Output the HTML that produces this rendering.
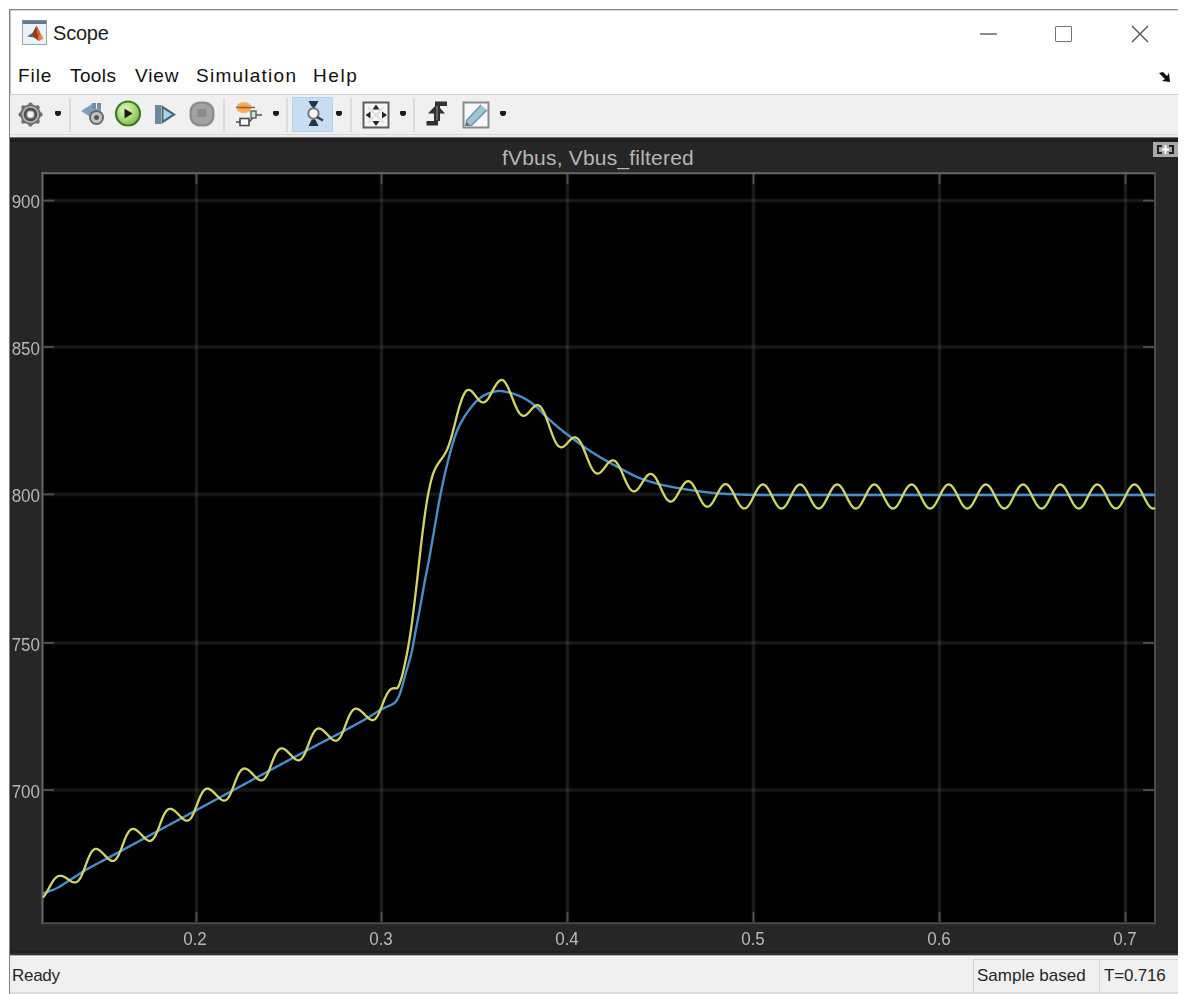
<!DOCTYPE html>
<html><head><meta charset="utf-8">
<style>
html,body{margin:0;padding:0;background:#ffffff;width:1188px;height:994px;overflow:hidden;}
body{position:relative;font-family:"Liberation Sans",sans-serif;}
.a{position:absolute;}
#win{left:9px;top:9px;width:1169px;height:985px;background:#ffffff;border-top:1px solid #888888;border-left:1px solid #828282;box-sizing:border-box;}
.t{position:absolute;white-space:nowrap;line-height:1;}
#menu .t{font-size:19px;color:#111111;top:65.5px;letter-spacing:0.4px;}
#tb{left:10px;top:94px;width:1168px;height:43px;background:#f0f0f0;border-top:1px solid #cfcfcf;box-sizing:border-box;}
#panel{left:10px;top:137px;width:1168px;height:818px;background:#262626;}
#sb{left:10px;top:957px;width:1168px;height:37px;background:#f0f0f0;}
.lbl{position:absolute;font-size:17px;color:#b8b8b8;line-height:1;white-space:nowrap;transform:scaleY(1.12);transform-origin:50% 55%;}
.sep{position:absolute;top:98px;width:2px;height:34px;background:#dcdcdc;}
.dd{position:absolute;top:111px;width:6px;height:5px;background:#1a1a1a;border-radius:1px 1px 3px 3px;}
</style></head><body>
<div id="win" class="a"></div>
<div class="a" style="left:10px;top:10px;width:1168px;height:1px;background:#d4d4d4;"></div><div class="a" style="left:10px;top:10px;width:1px;height:84px;background:#c4c4c4;"></div>

<!-- title bar -->
<svg class="a" style="left:22px;top:20px" width="26" height="26" viewBox="0 0 26 26">
  <rect x="0.5" y="0.5" width="24" height="24" fill="#eaf3f8" stroke="#9aa6b0"/>
  <rect x="0.5" y="0.5" width="24" height="3.5" fill="#66788e"/>
  <path d="M5 16.5 L11 12.5 L12.5 17.5 Z" fill="#5a6080"/>
  <path d="M10.5 13 L14.5 5.5 L17 21 L12 17.5 Z" fill="#9a3a1a"/>
  <path d="M14.5 5.5 L21.5 18.5 L17 21 Z" fill="#e2844c"/>
  <path d="M14.5 5.5 L18 13 L17 21 Z" fill="#c86030"/>
</svg>
<div class="t" style="left:53px;top:23px;font-size:20px;color:#1e1e1e;letter-spacing:-0.2px;">Scope</div>
<div class="a" style="left:980px;top:33px;width:17px;height:2px;background:#8c8c8c;"></div>
<div class="a" style="left:1055px;top:26px;width:17px;height:16px;border:1.5px solid #747474;border-radius:1px;box-sizing:border-box;"></div>
<svg class="a" style="left:1131px;top:25px" width="18" height="18" viewBox="0 0 18 18"><path d="M1 1 L17 17 M17 1 L1 17" stroke="#5c5c5c" stroke-width="1.5"/></svg>

<!-- menu -->
<div id="menu">
<div class="t" style="left:18px;letter-spacing:0.9px">File</div>
<div class="t" style="left:70px">Tools</div>
<div class="t" style="left:135px;letter-spacing:0.9px">View</div>
<div class="t" style="left:196px;letter-spacing:1.25px">Simulation</div>
<div class="t" style="left:313px;letter-spacing:1.6px">Help</div>
</div>
<svg class="a" style="left:1157px;top:70px" width="16" height="14" viewBox="0 0 16 14"><path d="M2 3 L6 2 L10 6 L12 3 L13 12 L5 11 L8 9 Z" fill="#101010"/></svg>

<!-- toolbar -->
<div id="tb" class="a"></div>
<div class="a" style="left:10px;top:134px;width:1168px;height:1px;background:#dadada;"></div><div class="a" style="left:10px;top:135px;width:1168px;height:2px;background:#ececec;"></div>
<!-- gear -->
<svg class="a" style="left:18px;top:102px" width="25" height="25" viewBox="0 0 25 25">
  <g fill="#6e6e6e">
    <circle cx="12.5" cy="12.5" r="10.3"/>
    <circle cx="12.5" cy="2.6" r="2.2"/><circle cx="12.5" cy="22.4" r="2.2"/><circle cx="2.6" cy="12.5" r="2.2"/><circle cx="22.4" cy="12.5" r="2.2"/>
    <circle cx="5.5" cy="5.5" r="2.2"/><circle cx="19.5" cy="5.5" r="2.2"/><circle cx="5.5" cy="19.5" r="2.2"/><circle cx="19.5" cy="19.5" r="2.2"/>
  </g>
  <circle cx="12.5" cy="12.5" r="8.6" fill="#b0b0b0"/>
  <circle cx="12.5" cy="12.5" r="5.4" fill="none" stroke="#505050" stroke-width="2.6"/>
  <circle cx="12.5" cy="12.5" r="2.9" fill="#f6f6f6"/>
</svg>
<div class="dd" style="left:55px"></div>
<div class="sep" style="left:69px"></div>
<!-- step back -->
<svg class="a" style="left:80px;top:101px" width="26" height="26" viewBox="0 0 26 26">
  <path d="M1 10 L12 3 L12 17 Z" fill="#7ea0bc"/>
  <rect x="12" y="2" width="4" height="6" fill="#6f90ac"/>
  <rect x="17" y="2" width="4" height="6" fill="#6f90ac"/>
  <path d="M12 8 L21 8 L21 13 L12 13 Z" fill="#86a6c0"/>
  <circle cx="16.5" cy="16.5" r="7.5" fill="#6a6a6a"/>
  <circle cx="16.5" cy="16.5" r="5.5" fill="#c4c4c4"/>
  <circle cx="16.5" cy="16.5" r="2.5" fill="#555555"/>
</svg>
<!-- run -->
<svg class="a" style="left:114px;top:100px" width="28" height="28" viewBox="0 0 28 28">
  <defs><radialGradient id="gg" cx="0.4" cy="0.35" r="0.7"><stop offset="0" stop-color="#e4f4c8"/><stop offset="0.6" stop-color="#a6d870"/><stop offset="1" stop-color="#78b848"/></radialGradient></defs>
  <circle cx="14" cy="13.5" r="12" fill="url(#gg)" stroke="#3e7a26" stroke-width="2.2"/>
  <path d="M10.5 8.5 L18.5 13.5 L10.5 18.5 Z" fill="#1a1a14"/>
</svg>
<!-- step forward -->
<svg class="a" style="left:154px;top:104px" width="24" height="21" viewBox="0 0 24 21">
  <rect x="1" y="1" width="6" height="19" fill="#6a8aa0"/>
  <path d="M7.5 1 L22 10.5 L7.5 20 Z" fill="#4e6878"/>
  <path d="M9.5 5 L18 10.5 L9.5 16 Z" fill="#a8d6f0"/>
</svg>
<!-- stop -->
<svg class="a" style="left:189px;top:101px" width="26" height="26" viewBox="0 0 26 26">
  <rect x="0.5" y="0.5" width="25" height="25" rx="10" fill="#8e8e8e"/>
  <rect x="3" y="3" width="20" height="20" rx="8" fill="#a2a2a2"/>
  <rect x="8.5" y="8" width="9" height="8" fill="#8a8a8a"/>
</svg>
<div class="sep" style="left:223px"></div>
<!-- highlight -->
<svg class="a" style="left:234px;top:100px" width="30" height="28" viewBox="0 0 30 28">
  <ellipse cx="10" cy="7.5" rx="7.5" ry="5.5" fill="#f2b060"/>
  <ellipse cx="10" cy="7.5" rx="4" ry="3" fill="#f8a040"/>
  <path d="M2 7.5 L21 7.5" stroke="#9a6030" stroke-width="1.5"/>
  <rect x="6" y="18.5" width="9" height="7" fill="#ffffff" stroke="#4a4a4a" stroke-width="1.6"/>
  <path d="M2 22 L6 22 M15 22 L19 18" stroke="#4a4a4a" stroke-width="1.4"/>
  <rect x="17" y="11" width="5" height="7" fill="#d0e4d8" stroke="#4a6a60" stroke-width="1.4"/>
  <path d="M22 15 L28 15" stroke="#5a5a5a" stroke-width="1.6"/>
</svg>
<div class="dd" style="left:273px"></div>
<div class="sep" style="left:286px"></div>
<!-- zoom (selected) -->
<div class="a" style="left:292px;top:97px;width:41px;height:35px;background:#c6ddf3;border:1px solid #b8d2ec;box-sizing:border-box;"></div>
<svg class="a" style="left:303px;top:100px" width="24" height="27" viewBox="0 0 24 27">
  <path d="M5.5 1 L15.5 1 L12.5 6.5 L8.5 6.5 Z" fill="#1e3450"/>
  <path d="M5.5 26 L15.5 26 L12.5 20 L8.5 20 Z" fill="#1e3450"/>
  <rect x="9" y="6" width="3" height="14" fill="#3a4a5a"/>
  <circle cx="10.5" cy="13.5" r="5.2" fill="#f8f8f8" stroke="#7a7a7a" stroke-width="2"/>
  <path d="M14 17 L20 20.5" stroke="#3a4050" stroke-width="2.6"/>
</svg>
<div class="dd" style="left:336px"></div>
<div class="sep" style="left:350px"></div>
<!-- autoscale -->
<svg class="a" style="left:362px;top:101px" width="28" height="28" viewBox="0 0 28 28">
  <rect x="1.5" y="1.5" width="25" height="25" fill="#f6f6f6" stroke="#5e5e5e" stroke-width="2"/>
  <path d="M6 6 L22 22 M22 6 L6 22" stroke="#e0e0e0" stroke-width="2"/>
  <path d="M14 3.5 L10.5 8.5 L17.5 8.5 Z M14 25 L10.5 20 L17.5 20 Z M3.5 14 L8.5 10.5 L8.5 17.5 Z M25 14 L20 10.5 L20 17.5 Z" fill="#262626"/>
</svg>
<div class="dd" style="left:400px"></div>
<div class="sep" style="left:413px"></div>
<!-- triggers -->
<svg class="a" style="left:425px;top:100px" width="24" height="27" viewBox="0 0 24 27">
  <path d="M10 1.5 L22 1.5 L22 6 L15 6 L15 8 L20 13.5 L15 13.5 L15 21 L13 21 L13 25.5 L1.5 25.5 L1.5 21 L9 21 L9 13.5 L3 13.5 L10 6 Z" fill="#303030"/>
  <path d="M12 6 L12 20" stroke="#9a9a9a" stroke-width="1"/>
</svg>
<!-- style -->
<svg class="a" style="left:462px;top:101px" width="28" height="28" viewBox="0 0 28 28">
  <rect x="1.5" y="1.5" width="25" height="25" fill="#f8f8f8" stroke="#8a8a8a" stroke-width="2"/>
  <path d="M4 20 L19 4 L25 9 L9 25 Z" fill="#9cc4dc"/>
  <path d="M4 20 L19 4 M9 25 L25 9" stroke="#6a8ca4" stroke-width="1.2"/>
  <path d="M3 25 L4 20 L9 25 Z" fill="#707070"/>
</svg>
<div class="dd" style="left:500px"></div>

<!-- panel -->
<div id="panel" class="a"></div>
<div class="a" style="left:10px;top:137px;width:1168px;height:1px;background:#707070;"></div><div class="a" style="left:10px;top:138px;width:1168px;height:4px;background:#1e1e1e;"></div>
<div class="a" style="left:10px;top:951px;width:1168px;height:2px;background:#202020;"></div><div class="a" style="left:10px;top:953px;width:1168px;height:2px;background:#333333;"></div><div class="a" style="left:10px;top:955px;width:1168px;height:1px;background:#b0b0b0;"></div><div class="a" style="left:10px;top:956px;width:1168px;height:1px;background:#f8f8f8;"></div>
<div class="t" style="left:502px;top:146.5px;font-size:21px;color:#b6b6b6;letter-spacing:0.2px;">fVbus, Vbus_filtered</div>
<!-- expand button -->
<div class="a" style="left:1153px;top:142px;width:25px;height:15px;background:#a8a8a8;"></div>
<svg class="a" style="left:1156px;top:144px" width="19" height="11" viewBox="0 0 19 11">
  <path d="M1 1 L6 1 L6 3 L3 3 L3 8 L6 8 L6 10 L1 10 Z M18 1 L13 1 L13 3 L16 3 L16 8 L13 8 L13 10 L18 10 Z" fill="#202020"/>
  <path d="M9.5 1 L9.5 10 M6 5.5 L13 5.5" stroke="#ffffff" stroke-width="2"/>
</svg>

<svg class="a" style="left:0;top:0" width="1188" height="994" viewBox="0 0 1188 994">
  <rect x="42" y="173" width="1114" height="751" fill="#000000"/>
  <filter id="gb" filterUnits="userSpaceOnUse" x="30" y="160" width="1140" height="780"><feGaussianBlur stdDeviation="0.85"/></filter>
  <g filter="url(#gb)"><g stroke="#545454" stroke-width="1"><line x1="43.5" y1="200.6" x2="1154" y2="200.6"/><line x1="43.5" y1="347.0" x2="1154" y2="347.0"/><line x1="43.5" y1="494.4" x2="1154" y2="494.4"/><line x1="43.5" y1="642.9" x2="1154" y2="642.9"/><line x1="43.5" y1="790.0" x2="1154" y2="790.0"/></g>
  <g stroke="#5a5a5a" stroke-width="1"><line x1="196.5" y1="174" x2="196.5" y2="922"/><line x1="381.5" y1="174" x2="381.5" y2="922"/><line x1="567.5" y1="174" x2="567.5" y2="922"/><line x1="753.5" y1="174" x2="753.5" y2="922"/><line x1="939.5" y1="174" x2="939.5" y2="922"/><line x1="1125.5" y1="174" x2="1125.5" y2="922"/></g></g>
  <g stroke="#505050" stroke-width="1.8"><line x1="43.5" y1="200.6" x2="54" y2="200.6"/><line x1="1143" y1="200.6" x2="1154" y2="200.6"/><line x1="43.5" y1="347.0" x2="54" y2="347.0"/><line x1="1143" y1="347.0" x2="1154" y2="347.0"/><line x1="43.5" y1="494.4" x2="54" y2="494.4"/><line x1="1143" y1="494.4" x2="1154" y2="494.4"/><line x1="43.5" y1="642.9" x2="54" y2="642.9"/><line x1="1143" y1="642.9" x2="1154" y2="642.9"/><line x1="43.5" y1="790.0" x2="54" y2="790.0"/><line x1="1143" y1="790.0" x2="1154" y2="790.0"/><line x1="196.5" y1="912" x2="196.5" y2="922"/><line x1="196.5" y1="174" x2="196.5" y2="184"/><line x1="381.5" y1="912" x2="381.5" y2="922"/><line x1="381.5" y1="174" x2="381.5" y2="184"/><line x1="567.5" y1="912" x2="567.5" y2="922"/><line x1="567.5" y1="174" x2="567.5" y2="184"/><line x1="753.5" y1="912" x2="753.5" y2="922"/><line x1="753.5" y1="174" x2="753.5" y2="184"/><line x1="939.5" y1="912" x2="939.5" y2="922"/><line x1="939.5" y1="174" x2="939.5" y2="184"/><line x1="1125.5" y1="912" x2="1125.5" y2="922"/><line x1="1125.5" y1="174" x2="1125.5" y2="184"/></g>
  <line x1="41.5" y1="173.2" x2="1156" y2="173.2" stroke="#686868" stroke-width="2"/>
  <line x1="42.5" y1="172.2" x2="42.5" y2="924.2" stroke="#686868" stroke-width="2"/>
  <line x1="1155" y1="172.2" x2="1155" y2="924.2" stroke="#4a4a4a" stroke-width="2"/>
  <line x1="43.5" y1="923.2" x2="1156" y2="923.2" stroke="#4a4a4a" stroke-width="2"/>
  <defs><filter id="bl" x="-1%" y="-1%" width="102%" height="102%"><feGaussianBlur stdDeviation="0.45"/></filter></defs>
  <g filter="url(#bl)"><path d="M43.0,893.38 L44.0,893.02 L45.0,892.67 L46.0,892.32 L47.0,891.98 L48.0,891.65 L49.0,891.31 L50.0,890.96 L51.0,890.60 L52.0,890.23 L53.0,889.85 L54.0,889.44 L55.0,889.00 L56.0,888.53 L57.0,888.03 L58.0,887.50 L59.0,886.94 L60.0,886.36 L61.0,885.75 L62.0,885.13 L63.0,884.50 L64.0,883.86 L65.0,883.21 L66.0,882.56 L67.0,881.91 L68.0,881.26 L69.0,880.63 L70.0,880.00 L71.0,879.38 L72.0,878.74 L73.0,878.10 L74.0,877.45 L75.0,876.80 L76.0,876.14 L77.0,875.48 L78.0,874.83 L79.0,874.17 L80.0,873.52 L81.0,872.88 L82.0,872.24 L83.0,871.61 L84.0,871.00 L85.0,870.40 L86.0,869.81 L87.0,869.23 L88.0,868.66 L89.0,868.09 L90.0,867.54 L91.0,866.99 L92.0,866.44 L93.0,865.90 L94.0,865.37 L95.0,864.83 L96.0,864.30 L97.0,863.78 L98.0,863.25 L99.0,862.73 L100.0,862.20 L101.0,861.68 L102.0,861.16 L103.0,860.63 L104.0,860.10 L105.0,859.57 L106.0,859.04 L107.0,858.50 L108.0,857.96 L109.0,857.42 L110.0,856.88 L111.0,856.34 L112.0,855.80 L113.0,855.26 L114.0,854.72 L115.0,854.18 L116.0,853.64 L117.0,853.10 L118.0,852.56 L119.0,852.02 L120.0,851.48 L121.0,850.94 L122.0,850.40 L123.0,849.86 L124.0,849.31 L125.0,848.77 L126.0,848.23 L127.0,847.69 L128.0,847.15 L129.0,846.61 L130.0,846.07 L131.0,845.53 L132.0,844.99 L133.0,844.45 L134.0,843.91 L135.0,843.37 L136.0,842.83 L137.0,842.29 L138.0,841.74 L139.0,841.20 L140.0,840.66 L141.0,840.12 L142.0,839.58 L143.0,839.04 L144.0,838.50 L145.0,837.96 L146.0,837.42 L147.0,836.88 L148.0,836.34 L149.0,835.79 L150.0,835.25 L151.0,834.71 L152.0,834.17 L153.0,833.63 L154.0,833.09 L155.0,832.55 L156.0,832.01 L157.0,831.47 L158.0,830.93 L159.0,830.38 L160.0,829.84 L161.0,829.30 L162.0,828.76 L163.0,828.22 L164.0,827.68 L165.0,827.14 L166.0,826.60 L167.0,826.06 L168.0,825.51 L169.0,824.97 L170.0,824.43 L171.0,823.89 L172.0,823.35 L173.0,822.81 L174.0,822.27 L175.0,821.73 L176.0,821.19 L177.0,820.64 L178.0,820.10 L179.0,819.56 L180.0,819.02 L181.0,818.48 L182.0,817.94 L183.0,817.40 L184.0,816.86 L185.0,816.32 L186.0,815.77 L187.0,815.23 L188.0,814.69 L189.0,814.15 L190.0,813.61 L191.0,813.07 L192.0,812.53 L193.0,811.99 L194.0,811.45 L195.0,810.90 L196.0,810.36 L197.0,809.82 L198.0,809.28 L199.0,808.74 L200.0,808.20 L201.0,807.66 L202.0,807.12 L203.0,806.58 L204.0,806.04 L205.0,805.50 L206.0,804.95 L207.0,804.41 L208.0,803.87 L209.0,803.33 L210.0,802.79 L211.0,802.25 L212.0,801.71 L213.0,801.17 L214.0,800.63 L215.0,800.09 L216.0,799.54 L217.0,799.00 L218.0,798.46 L219.0,797.92 L220.0,797.38 L221.0,796.84 L222.0,796.30 L223.0,795.76 L224.0,795.22 L225.0,794.67 L226.0,794.13 L227.0,793.59 L228.0,793.05 L229.0,792.51 L230.0,791.97 L231.0,791.43 L232.0,790.89 L233.0,790.35 L234.0,789.80 L235.0,789.26 L236.0,788.72 L237.0,788.18 L238.0,787.64 L239.0,787.10 L240.0,786.56 L241.0,786.02 L242.0,785.48 L243.0,784.93 L244.0,784.39 L245.0,783.85 L246.0,783.31 L247.0,782.77 L248.0,782.23 L249.0,781.69 L250.0,781.15 L251.0,780.61 L252.0,780.06 L253.0,779.52 L254.0,778.98 L255.0,778.44 L256.0,777.90 L257.0,777.36 L258.0,776.82 L259.0,776.28 L260.0,775.74 L261.0,775.19 L262.0,774.65 L263.0,774.11 L264.0,773.57 L265.0,773.03 L266.0,772.49 L267.0,771.95 L268.0,771.41 L269.0,770.87 L270.0,770.32 L271.0,769.78 L272.0,769.24 L273.0,768.70 L274.0,768.16 L275.0,767.62 L276.0,767.08 L277.0,766.54 L278.0,766.00 L279.0,765.46 L280.0,764.92 L281.0,764.37 L282.0,763.83 L283.0,763.29 L284.0,762.75 L285.0,762.21 L286.0,761.67 L287.0,761.13 L288.0,760.59 L289.0,760.05 L290.0,759.51 L291.0,758.97 L292.0,758.43 L293.0,757.88 L294.0,757.34 L295.0,756.80 L296.0,756.26 L297.0,755.72 L298.0,755.18 L299.0,754.64 L300.0,754.10 L301.0,753.56 L302.0,753.02 L303.0,752.48 L304.0,751.95 L305.0,751.41 L306.0,750.88 L307.0,750.35 L308.0,749.82 L309.0,749.29 L310.0,748.76 L311.0,748.23 L312.0,747.71 L313.0,747.18 L314.0,746.65 L315.0,746.13 L316.0,745.60 L317.0,745.08 L318.0,744.56 L319.0,744.03 L320.0,743.51 L321.0,742.99 L322.0,742.47 L323.0,741.95 L324.0,741.42 L325.0,740.90 L326.0,740.38 L327.0,739.86 L328.0,739.34 L329.0,738.81 L330.0,738.29 L331.0,737.77 L332.0,737.24 L333.0,736.72 L334.0,736.19 L335.0,735.67 L336.0,735.14 L337.0,734.62 L338.0,734.09 L339.0,733.56 L340.0,733.03 L341.0,732.50 L342.0,731.97 L343.0,731.44 L344.0,730.90 L345.0,730.37 L346.0,729.83 L347.0,729.29 L348.0,728.75 L349.0,728.21 L350.0,727.67 L351.0,727.12 L352.0,726.58 L353.0,726.03 L354.0,725.48 L355.0,724.93 L356.0,724.38 L357.0,723.82 L358.0,723.26 L359.0,722.70 L360.0,722.14 L361.0,721.58 L362.0,721.01 L363.0,720.44 L364.0,719.87 L365.0,719.30 L366.0,718.72 L367.0,718.14 L368.0,717.56 L369.0,716.97 L370.0,716.38 L371.0,715.79 L372.0,715.20 L373.0,714.59 L374.0,713.94 L375.0,713.28 L376.0,712.61 L377.0,711.94 L378.0,711.28 L379.0,710.65 L380.0,710.05 L381.0,709.50 L382.0,709.00 L383.0,708.53 L384.0,708.09 L385.0,707.66 L386.0,707.23 L387.0,706.78 L388.0,706.30 L389.0,705.83 L390.0,705.39 L391.0,704.94 L392.0,704.47 L393.0,703.92 L394.0,703.28 L395.0,702.50 L396.0,701.41 L397.0,699.89 L398.0,698.06 L399.0,696.00 L400.0,693.45 L401.0,690.32 L402.0,687.00 L403.0,683.47 L404.0,679.69 L405.0,676.00 L406.0,672.54 L407.0,669.16 L408.0,665.75 L409.0,662.26 L410.0,658.80 L411.0,655.08 L412.0,650.67 L413.0,645.36 L414.0,639.73 L415.0,634.36 L416.0,629.11 L417.0,623.89 L418.0,618.66 L419.0,613.38 L420.0,608.00 L421.0,602.45 L422.0,596.76 L423.0,591.03 L424.0,585.41 L425.0,580.00 L426.0,574.94 L427.0,570.06 L428.0,565.00 L429.0,559.63 L430.0,554.07 L431.0,548.40 L432.0,542.69 L433.0,537.00 L434.0,531.25 L435.0,525.36 L436.0,519.43 L437.0,513.54 L438.0,507.77 L439.0,502.23 L440.0,497.00 L441.0,492.01 L442.0,487.14 L443.0,482.39 L444.0,477.79 L445.0,473.34 L446.0,469.05 L447.0,464.94 L448.0,461.00 L449.0,457.17 L450.0,453.38 L451.0,449.66 L452.0,446.06 L453.0,442.60 L454.0,439.33 L455.0,436.29 L456.0,433.50 L457.0,431.00 L458.0,428.73 L459.0,426.58 L460.0,424.56 L461.0,422.64 L462.0,420.83 L463.0,419.10 L464.0,417.46 L465.0,415.88 L466.0,414.37 L467.0,412.91 L468.0,411.50 L469.0,410.12 L470.0,408.78 L471.0,407.47 L472.0,406.21 L473.0,405.00 L474.0,403.84 L475.0,402.74 L476.0,401.70 L477.0,400.73 L478.0,399.84 L479.0,399.01 L480.0,398.20 L481.0,397.42 L482.0,396.68 L483.0,395.99 L484.0,395.36 L485.0,394.80 L486.0,394.32 L487.0,393.93 L488.0,393.57 L489.0,393.22 L490.0,392.88 L491.0,392.56 L492.0,392.25 L493.0,391.97 L494.0,391.72 L495.0,391.49 L496.0,391.31 L497.0,391.16 L498.0,391.06 L499.0,391.01 L500.0,391.01 L501.0,391.06 L502.0,391.16 L503.0,391.31 L504.0,391.48 L505.0,391.67 L506.0,391.88 L507.0,392.09 L508.0,392.30 L509.0,392.52 L510.0,392.76 L511.0,393.03 L512.0,393.32 L513.0,393.63 L514.0,393.96 L515.0,394.31 L516.0,394.68 L517.0,395.06 L518.0,395.46 L519.0,395.87 L520.0,396.29 L521.0,396.72 L522.0,397.18 L523.0,397.67 L524.0,398.20 L525.0,398.75 L526.0,399.32 L527.0,399.92 L528.0,400.55 L529.0,401.20 L530.0,401.87 L531.0,402.56 L532.0,403.27 L533.0,404.00 L534.0,404.77 L535.0,405.61 L536.0,406.51 L537.0,407.45 L538.0,408.43 L539.0,409.44 L540.0,410.47 L541.0,411.50 L542.0,412.54 L543.0,413.57 L544.0,414.57 L545.0,415.56 L546.0,416.50 L547.0,417.42 L548.0,418.34 L549.0,419.26 L550.0,420.17 L551.0,421.07 L552.0,421.97 L553.0,422.86 L554.0,423.74 L555.0,424.62 L556.0,425.48 L557.0,426.33 L558.0,427.17 L559.0,427.99 L560.0,428.81 L561.0,429.61 L562.0,430.40 L563.0,431.19 L564.0,431.96 L565.0,432.73 L566.0,433.49 L567.0,434.25 L568.0,435.00 L569.0,435.75 L570.0,436.50 L571.0,437.25 L572.0,437.99 L573.0,438.74 L574.0,439.49 L575.0,440.23 L576.0,440.97 L577.0,441.71 L578.0,442.45 L579.0,443.19 L580.0,443.92 L581.0,444.64 L582.0,445.37 L583.0,446.08 L584.0,446.79 L585.0,447.50 L586.0,448.20 L587.0,448.89 L588.0,449.57 L589.0,450.25 L590.0,450.91 L591.0,451.57 L592.0,452.22 L593.0,452.85 L594.0,453.48 L595.0,454.11 L596.0,454.72 L597.0,455.33 L598.0,455.94 L599.0,456.54 L600.0,457.13 L601.0,457.72 L602.0,458.30 L603.0,458.88 L604.0,459.45 L605.0,460.02 L606.0,460.59 L607.0,461.15 L608.0,461.71 L609.0,462.26 L610.0,462.81 L611.0,463.36 L612.0,463.91 L613.0,464.45 L614.0,464.99 L615.0,465.53 L616.0,466.07 L617.0,466.60 L618.0,467.13 L619.0,467.67 L620.0,468.21 L621.0,468.75 L622.0,469.29 L623.0,469.84 L624.0,470.39 L625.0,470.94 L626.0,471.48 L627.0,472.03 L628.0,472.56 L629.0,473.10 L630.0,473.62 L631.0,474.14 L632.0,474.65 L633.0,475.15 L634.0,475.64 L635.0,476.11 L636.0,476.57 L637.0,477.01 L638.0,477.44 L639.0,477.85 L640.0,478.24 L641.0,478.61 L642.0,478.97 L643.0,479.32 L644.0,479.67 L645.0,480.01 L646.0,480.34 L647.0,480.67 L648.0,480.99 L649.0,481.30 L650.0,481.61 L651.0,481.91 L652.0,482.21 L653.0,482.50 L654.0,482.78 L655.0,483.06 L656.0,483.33 L657.0,483.59 L658.0,483.86 L659.0,484.11 L660.0,484.36 L661.0,484.60 L662.0,484.84 L663.0,485.08 L664.0,485.31 L665.0,485.53 L666.0,485.75 L667.0,485.96 L668.0,486.17 L669.0,486.38 L670.0,486.58 L671.0,486.78 L672.0,486.98 L673.0,487.17 L674.0,487.36 L675.0,487.54 L676.0,487.73 L677.0,487.91 L678.0,488.08 L679.0,488.26 L680.0,488.43 L681.0,488.59 L682.0,488.76 L683.0,488.92 L684.0,489.08 L685.0,489.24 L686.0,489.39 L687.0,489.54 L688.0,489.69 L689.0,489.84 L690.0,489.99 L691.0,490.13 L692.0,490.27 L693.0,490.41 L694.0,490.55 L695.0,490.68 L696.0,490.82 L697.0,490.95 L698.0,491.09 L699.0,491.23 L700.0,491.36 L701.0,491.50 L702.0,491.63 L703.0,491.76 L704.0,491.89 L705.0,492.02 L706.0,492.15 L707.0,492.27 L708.0,492.39 L709.0,492.51 L710.0,492.62 L711.0,492.73 L712.0,492.84 L713.0,492.94 L714.0,493.04 L715.0,493.13 L716.0,493.21 L717.0,493.30 L718.0,493.37 L719.0,493.44 L720.0,493.50 L721.0,493.56 L722.0,493.62 L723.0,493.67 L724.0,493.73 L725.0,493.79 L726.0,493.84 L727.0,493.90 L728.0,493.96 L729.0,494.01 L730.0,494.06 L731.0,494.12 L732.0,494.17 L733.0,494.22 L734.0,494.27 L735.0,494.32 L736.0,494.36 L737.0,494.41 L738.0,494.46 L739.0,494.50 L740.0,494.54 L741.0,494.58 L742.0,494.62 L743.0,494.66 L744.0,494.70 L745.0,494.73 L746.0,494.76 L747.0,494.79 L748.0,494.82 L749.0,494.85 L750.0,494.88 L751.0,494.90 L752.0,494.92 L753.0,494.94 L754.0,494.95 L755.0,494.97 L756.0,494.98 L757.0,494.99 L758.0,494.99 L759.0,495.00 L760.0,495.00 L761.0,495.00 L762.0,495.00 L763.0,495.00 L764.0,495.00 L765.0,495.00 L766.0,495.00 L767.0,495.00 L768.0,495.00 L769.0,495.00 L770.0,495.00 L771.0,495.00 L772.0,495.00 L773.0,495.00 L774.0,495.00 L775.0,495.00 L776.0,495.00 L777.0,495.00 L778.0,495.00 L779.0,495.00 L780.0,495.00 L781.0,495.00 L782.0,495.00 L783.0,495.00 L784.0,495.00 L785.0,495.00 L786.0,495.00 L787.0,495.00 L788.0,495.00 L789.0,495.00 L790.0,495.00 L791.0,495.00 L792.0,495.00 L793.0,495.00 L794.0,495.00 L795.0,495.00 L796.0,495.00 L797.0,495.00 L798.0,495.00 L799.0,495.00 L800.0,495.00 L801.0,495.00 L802.0,495.00 L803.0,495.00 L804.0,495.00 L805.0,495.00 L806.0,495.00 L807.0,495.00 L808.0,495.00 L809.0,495.00 L810.0,495.00 L811.0,495.00 L812.0,495.00 L813.0,495.00 L814.0,495.00 L815.0,495.00 L816.0,495.00 L817.0,495.00 L818.0,495.00 L819.0,495.00 L820.0,495.00 L821.0,495.00 L822.0,495.00 L823.0,495.00 L824.0,495.00 L825.0,495.00 L826.0,495.00 L827.0,495.00 L828.0,495.00 L829.0,495.00 L830.0,495.00 L831.0,495.00 L832.0,495.00 L833.0,495.00 L834.0,495.00 L835.0,495.00 L836.0,495.00 L837.0,495.00 L838.0,495.00 L839.0,495.00 L840.0,495.00 L841.0,495.00 L842.0,495.00 L843.0,495.00 L844.0,495.00 L845.0,495.00 L846.0,495.00 L847.0,495.00 L848.0,495.00 L849.0,495.00 L850.0,495.00 L851.0,495.00 L852.0,495.00 L853.0,495.00 L854.0,495.00 L855.0,495.00 L856.0,495.00 L857.0,495.00 L858.0,495.00 L859.0,495.00 L860.0,495.00 L861.0,495.00 L862.0,495.00 L863.0,495.00 L864.0,495.00 L865.0,495.00 L866.0,495.00 L867.0,495.00 L868.0,495.00 L869.0,495.00 L870.0,495.00 L871.0,495.00 L872.0,495.00 L873.0,495.00 L874.0,495.00 L875.0,495.00 L876.0,495.00 L877.0,495.00 L878.0,495.00 L879.0,495.00 L880.0,495.00 L881.0,495.00 L882.0,495.00 L883.0,495.00 L884.0,495.00 L885.0,495.00 L886.0,495.00 L887.0,495.00 L888.0,495.00 L889.0,495.00 L890.0,495.00 L891.0,495.00 L892.0,495.00 L893.0,495.00 L894.0,495.00 L895.0,495.00 L896.0,495.00 L897.0,495.00 L898.0,495.00 L899.0,495.00 L900.0,495.00 L901.0,495.00 L902.0,495.00 L903.0,495.00 L904.0,495.00 L905.0,495.00 L906.0,495.00 L907.0,495.00 L908.0,495.00 L909.0,495.00 L910.0,495.00 L911.0,495.00 L912.0,495.00 L913.0,495.00 L914.0,495.00 L915.0,495.00 L916.0,495.00 L917.0,495.00 L918.0,495.00 L919.0,495.00 L920.0,495.00 L921.0,495.00 L922.0,495.00 L923.0,495.00 L924.0,495.00 L925.0,495.00 L926.0,495.00 L927.0,495.00 L928.0,495.00 L929.0,495.00 L930.0,495.00 L931.0,495.00 L932.0,495.00 L933.0,495.00 L934.0,495.00 L935.0,495.00 L936.0,495.00 L937.0,495.00 L938.0,495.00 L939.0,495.00 L940.0,495.00 L941.0,495.00 L942.0,495.00 L943.0,495.00 L944.0,495.00 L945.0,495.00 L946.0,495.00 L947.0,495.00 L948.0,495.00 L949.0,495.00 L950.0,495.00 L951.0,495.00 L952.0,495.00 L953.0,495.00 L954.0,495.00 L955.0,495.00 L956.0,495.00 L957.0,495.00 L958.0,495.00 L959.0,495.00 L960.0,495.00 L961.0,495.00 L962.0,495.00 L963.0,495.00 L964.0,495.00 L965.0,495.00 L966.0,495.00 L967.0,495.00 L968.0,495.00 L969.0,495.00 L970.0,495.00 L971.0,495.00 L972.0,495.00 L973.0,495.00 L974.0,495.00 L975.0,495.00 L976.0,495.00 L977.0,495.00 L978.0,495.00 L979.0,495.00 L980.0,495.00 L981.0,495.00 L982.0,495.00 L983.0,495.00 L984.0,495.00 L985.0,495.00 L986.0,495.00 L987.0,495.00 L988.0,495.00 L989.0,495.00 L990.0,495.00 L991.0,495.00 L992.0,495.00 L993.0,495.00 L994.0,495.00 L995.0,495.00 L996.0,495.00 L997.0,495.00 L998.0,495.00 L999.0,495.00 L1000.0,495.00 L1001.0,495.00 L1002.0,495.00 L1003.0,495.00 L1004.0,495.00 L1005.0,495.00 L1006.0,495.00 L1007.0,495.00 L1008.0,495.00 L1009.0,495.00 L1010.0,495.00 L1011.0,495.00 L1012.0,495.00 L1013.0,495.00 L1014.0,495.00 L1015.0,495.00 L1016.0,495.00 L1017.0,495.00 L1018.0,495.00 L1019.0,495.00 L1020.0,495.00 L1021.0,495.00 L1022.0,495.00 L1023.0,495.00 L1024.0,495.00 L1025.0,495.00 L1026.0,495.00 L1027.0,495.00 L1028.0,495.00 L1029.0,495.00 L1030.0,495.00 L1031.0,495.00 L1032.0,495.00 L1033.0,495.00 L1034.0,495.00 L1035.0,495.00 L1036.0,495.00 L1037.0,495.00 L1038.0,495.00 L1039.0,495.00 L1040.0,495.00 L1041.0,495.00 L1042.0,495.00 L1043.0,495.00 L1044.0,495.00 L1045.0,495.00 L1046.0,495.00 L1047.0,495.00 L1048.0,495.00 L1049.0,495.00 L1050.0,495.00 L1051.0,495.00 L1052.0,495.00 L1053.0,495.00 L1054.0,495.00 L1055.0,495.00 L1056.0,495.00 L1057.0,495.00 L1058.0,495.00 L1059.0,495.00 L1060.0,495.00 L1061.0,495.00 L1062.0,495.00 L1063.0,495.00 L1064.0,495.00 L1065.0,495.00 L1066.0,495.00 L1067.0,495.00 L1068.0,495.00 L1069.0,495.00 L1070.0,495.00 L1071.0,495.00 L1072.0,495.00 L1073.0,495.00 L1074.0,495.00 L1075.0,495.00 L1076.0,495.00 L1077.0,495.00 L1078.0,495.00 L1079.0,495.00 L1080.0,495.00 L1081.0,495.00 L1082.0,495.00 L1083.0,495.00 L1084.0,495.00 L1085.0,495.00 L1086.0,495.00 L1087.0,495.00 L1088.0,495.00 L1089.0,495.00 L1090.0,495.00 L1091.0,495.00 L1092.0,495.00 L1093.0,495.00 L1094.0,495.00 L1095.0,495.00 L1096.0,495.00 L1097.0,495.00 L1098.0,495.00 L1099.0,495.00 L1100.0,495.00 L1101.0,495.00 L1102.0,495.00 L1103.0,495.00 L1104.0,495.00 L1105.0,495.00 L1106.0,495.00 L1107.0,495.00 L1108.0,495.00 L1109.0,495.00 L1110.0,495.00 L1111.0,495.00 L1112.0,495.00 L1113.0,495.00 L1114.0,495.00 L1115.0,495.00 L1116.0,495.00 L1117.0,495.00 L1118.0,495.00 L1119.0,495.00 L1120.0,495.00 L1121.0,495.00 L1122.0,495.00 L1123.0,495.00 L1124.0,495.00 L1125.0,495.00 L1126.0,495.00 L1127.0,495.00 L1128.0,495.00 L1129.0,495.00 L1130.0,495.00 L1131.0,495.00 L1132.0,495.00 L1133.0,495.00 L1134.0,495.00 L1135.0,495.00 L1136.0,495.00 L1137.0,495.00 L1138.0,495.00 L1139.0,495.00 L1140.0,495.00 L1141.0,495.00 L1142.0,495.00 L1143.0,495.00 L1144.0,495.00 L1145.0,495.00 L1146.0,495.00 L1147.0,495.00 L1148.0,495.00 L1149.0,495.00 L1150.0,495.00 L1151.0,495.00 L1152.0,495.00 L1153.0,495.00 L1154.0,495.00 L1155.0,495.00" fill="none" stroke="#4a8cc8" stroke-width="2.4" stroke-linejoin="round"/>
  <path d="M43.0,897.37 L43.5,896.85 L44.0,896.26 L44.5,895.63 L45.0,894.94 L45.5,894.20 L46.0,893.41 L46.5,892.59 L47.0,891.72 L47.5,890.83 L48.0,889.92 L48.5,888.99 L49.0,888.06 L49.5,887.12 L50.0,886.18 L50.5,885.26 L51.0,884.36 L51.5,883.49 L52.0,882.65 L52.5,881.84 L53.0,881.08 L53.5,880.37 L54.0,879.70 L54.5,879.08 L55.0,878.52 L55.5,878.01 L56.0,877.56 L56.5,877.15 L57.0,876.81 L57.5,876.51 L58.0,876.27 L58.5,876.08 L59.0,875.93 L59.5,875.84 L60.0,875.79 L60.5,875.78 L61.0,875.81 L61.5,875.89 L62.0,875.99 L62.5,876.13 L63.0,876.31 L63.5,876.51 L64.0,876.73 L64.5,876.99 L65.0,877.26 L65.5,877.55 L66.0,877.86 L66.5,878.18 L67.0,878.51 L67.5,878.84 L68.0,879.19 L68.5,879.53 L69.0,879.87 L69.5,880.22 L70.0,880.55 L70.5,880.88 L71.0,881.18 L71.5,881.47 L72.0,881.72 L72.5,881.95 L73.0,882.14 L73.5,882.29 L74.0,882.39 L74.5,882.44 L75.0,882.44 L75.5,882.38 L76.0,882.25 L76.5,882.05 L77.0,881.78 L77.5,881.43 L78.0,881.00 L78.5,880.49 L79.0,879.89 L79.5,879.21 L80.0,878.45 L80.5,877.60 L81.0,876.68 L81.5,875.68 L82.0,874.60 L82.5,873.46 L83.0,872.27 L83.5,871.02 L84.0,869.74 L84.5,868.42 L85.0,867.08 L85.5,865.74 L86.0,864.39 L86.5,863.05 L87.0,861.73 L87.5,860.44 L88.0,859.19 L88.5,857.99 L89.0,856.84 L89.5,855.76 L90.0,854.74 L90.5,853.80 L91.0,852.93 L91.5,852.15 L92.0,851.45 L92.5,850.83 L93.0,850.30 L93.5,849.85 L94.0,849.48 L94.5,849.19 L95.0,848.98 L95.5,848.90 L96.0,848.88 L96.5,848.93 L97.0,849.05 L97.5,849.21 L98.0,849.43 L98.5,849.69 L99.0,850.00 L99.5,850.34 L100.0,850.72 L100.5,851.13 L101.0,851.56 L101.5,852.02 L102.0,852.50 L102.5,852.99 L103.0,853.50 L103.5,854.01 L104.0,854.54 L104.5,855.06 L105.0,855.59 L105.5,856.12 L106.0,856.63 L106.5,857.14 L107.0,857.64 L107.5,858.11 L108.0,858.57 L108.5,859.00 L109.0,859.40 L109.5,859.77 L110.0,860.10 L110.5,860.38 L111.0,860.62 L111.5,860.80 L112.0,860.92 L112.5,860.97 L113.0,860.95 L113.5,860.86 L114.0,860.69 L114.5,860.43 L115.0,860.09 L115.5,859.66 L116.0,859.13 L116.5,858.52 L117.0,857.82 L117.5,857.03 L118.0,856.15 L118.5,855.20 L119.0,854.16 L119.5,853.06 L120.0,851.89 L120.5,850.67 L121.0,849.41 L121.5,848.11 L122.0,846.79 L122.5,845.45 L123.0,844.11 L123.5,842.78 L124.0,841.47 L124.5,840.20 L125.0,838.96 L125.5,837.77 L126.0,836.63 L126.5,835.56 L127.0,834.57 L127.5,833.64 L128.0,832.80 L128.5,832.04 L129.0,831.37 L129.5,830.78 L130.0,830.27 L130.5,829.85 L131.0,829.51 L131.5,829.25 L132.0,829.07 L132.5,828.96 L133.0,828.91 L133.5,828.94 L134.0,829.02 L134.5,829.16 L135.0,829.36 L135.5,829.60 L136.0,829.88 L136.5,830.21 L137.0,830.57 L137.5,830.96 L138.0,831.37 L138.5,831.82 L139.0,832.28 L139.5,832.76 L140.0,833.26 L140.5,833.76 L141.0,834.28 L141.5,834.80 L142.0,835.32 L142.5,835.84 L143.0,836.36 L143.5,836.87 L144.0,837.37 L144.5,837.85 L145.0,838.31 L145.5,838.75 L146.0,839.16 L146.5,839.54 L147.0,839.88 L147.5,840.18 L148.0,840.43 L148.5,840.63 L149.0,840.77 L149.5,840.84 L150.0,840.85 L150.5,840.78 L151.0,840.63 L151.5,840.40 L152.0,840.09 L152.5,839.68 L153.0,839.19 L153.5,838.61 L154.0,837.93 L154.5,837.17 L155.0,836.32 L155.5,835.39 L156.0,834.38 L156.5,833.30 L157.0,832.15 L157.5,830.94 L158.0,829.69 L158.5,828.40 L159.0,827.09 L159.5,825.75 L160.0,824.42 L160.5,823.08 L161.0,821.77 L161.5,820.47 L162.0,819.22 L162.5,818.01 L163.0,816.86 L163.5,815.77 L164.0,814.75 L164.5,813.80 L165.0,812.93 L165.5,812.15 L166.0,811.44 L166.5,810.83 L167.0,810.29 L167.5,809.85 L168.0,809.48 L168.5,809.19 L169.0,808.99 L169.5,808.85 L170.0,808.79 L170.5,808.79 L171.0,808.86 L171.5,808.98 L172.0,809.16 L172.5,809.39 L173.0,809.66 L173.5,809.97 L174.0,810.32 L174.5,810.70 L175.0,811.11 L175.5,811.54 L176.0,812.00 L176.5,812.47 L177.0,812.96 L177.5,813.47 L178.0,813.98 L178.5,814.50 L179.0,815.02 L179.5,815.54 L180.0,816.06 L180.5,816.57 L181.0,817.07 L181.5,817.56 L182.0,818.03 L182.5,818.48 L183.0,818.90 L183.5,819.29 L184.0,819.64 L184.5,819.96 L185.0,820.22 L185.5,820.44 L186.0,820.60 L186.5,820.69 L187.0,820.72 L187.5,820.67 L188.0,820.55 L188.5,820.35 L189.0,820.06 L189.5,819.69 L190.0,819.22 L190.5,818.67 L191.0,818.02 L191.5,817.29 L192.0,816.47 L192.5,815.56 L193.0,814.58 L193.5,813.52 L194.0,812.39 L194.5,811.20 L195.0,809.96 L195.5,808.69 L196.0,807.38 L196.5,806.05 L197.0,804.71 L197.5,803.37 L198.0,802.05 L198.5,800.75 L199.0,799.48 L199.5,798.26 L200.0,797.09 L200.5,795.98 L201.0,794.94 L201.5,793.97 L202.0,793.07 L202.5,792.26 L203.0,791.53 L203.5,790.88 L204.0,790.32 L204.5,789.85 L205.0,789.46 L205.5,789.14 L206.0,788.91 L206.5,788.76 L207.0,788.67 L207.5,788.65 L208.0,788.70 L208.5,788.81 L209.0,788.97 L209.5,789.18 L210.0,789.43 L210.5,789.73 L211.0,790.07 L211.5,790.44 L212.0,790.84 L212.5,791.27 L213.0,791.72 L213.5,792.19 L214.0,792.67 L214.5,793.17 L215.0,793.68 L215.5,794.20 L216.0,794.72 L216.5,795.24 L217.0,795.76 L217.5,796.28 L218.0,796.78 L218.5,797.28 L219.0,797.75 L219.5,798.21 L220.0,798.64 L220.5,799.04 L221.0,799.40 L221.5,799.73 L222.0,800.01 L222.5,800.24 L223.0,800.42 L223.5,800.54 L224.0,800.59 L224.5,800.57 L225.0,800.47 L225.5,800.29 L226.0,800.03 L226.5,799.69 L227.0,799.25 L227.5,798.73 L228.0,798.11 L228.5,797.40 L229.0,796.61 L229.5,795.73 L230.0,794.77 L230.5,793.73 L231.0,792.62 L231.5,791.46 L232.0,790.23 L232.5,788.97 L233.0,787.67 L233.5,786.34 L234.0,785.01 L234.5,783.67 L235.0,782.34 L235.5,781.03 L236.0,779.75 L236.5,778.52 L237.0,777.33 L237.5,776.20 L238.0,775.13 L238.5,774.13 L239.0,773.22 L239.5,772.38 L240.0,771.62 L240.5,770.95 L241.0,770.36 L241.5,769.86 L242.0,769.44 L242.5,769.10 L243.0,768.85 L243.5,768.66 L244.0,768.56 L244.5,768.52 L245.0,768.54 L245.5,768.63 L246.0,768.77 L246.5,768.97 L247.0,769.21 L247.5,769.50 L248.0,769.82 L248.5,770.18 L249.0,770.58 L249.5,770.99 L250.0,771.44 L250.5,771.90 L251.0,772.38 L251.5,772.88 L252.0,773.38 L252.5,773.90 L253.0,774.42 L253.5,774.94 L254.0,775.46 L254.5,775.98 L255.0,776.49 L255.5,776.99 L256.0,777.47 L256.5,777.93 L257.0,778.37 L257.5,778.78 L258.0,779.16 L258.5,779.50 L259.0,779.79 L259.5,780.04 L260.0,780.24 L260.5,780.37 L261.0,780.44 L261.5,780.45 L262.0,780.37 L262.5,780.22 L263.0,779.99 L263.5,779.67 L264.0,779.27 L264.5,778.77 L265.0,778.18 L265.5,777.50 L266.0,776.74 L266.5,775.89 L267.0,774.95 L267.5,773.94 L268.0,772.85 L268.5,771.70 L269.0,770.50 L269.5,769.24 L270.0,767.95 L270.5,766.63 L271.0,765.30 L271.5,763.96 L272.0,762.63 L272.5,761.31 L273.0,760.02 L273.5,758.77 L274.0,757.57 L274.5,756.42 L275.0,755.33 L275.5,754.31 L276.0,753.37 L276.5,752.50 L277.0,751.72 L277.5,751.02 L278.0,750.41 L278.5,749.88 L279.0,749.43 L279.5,749.07 L280.0,748.79 L280.5,748.58 L281.0,748.45 L281.5,748.39 L282.0,748.40 L282.5,748.47 L283.0,748.59 L283.5,748.77 L284.0,749.00 L284.5,749.27 L285.0,749.58 L285.5,749.93 L286.0,750.32 L286.5,750.73 L287.0,751.16 L287.5,751.62 L288.0,752.10 L288.5,752.59 L289.0,753.09 L289.5,753.61 L290.0,754.12 L290.5,754.65 L291.0,755.17 L291.5,755.69 L292.0,756.20 L292.5,756.70 L293.0,757.19 L293.5,757.66 L294.0,758.10 L294.5,758.52 L295.0,758.91 L295.5,759.26 L296.0,759.58 L296.5,759.84 L297.0,760.05 L297.5,760.21 L298.0,760.30 L298.5,760.33 L299.0,760.28 L299.5,760.15 L300.0,759.95 L300.5,759.66 L301.0,759.28 L301.5,758.82 L302.0,758.26 L302.5,757.61 L303.0,756.88 L303.5,756.05 L304.0,755.15 L304.5,754.16 L305.0,753.10 L305.5,751.97 L306.0,750.79 L306.5,749.56 L307.0,748.28 L307.5,746.98 L308.0,745.65 L308.5,744.32 L309.0,742.99 L309.5,741.67 L310.0,740.38 L310.5,739.12 L311.0,737.91 L311.5,736.74 L312.0,735.64 L312.5,734.61 L313.0,733.65 L313.5,732.77 L314.0,731.96 L314.5,731.24 L315.0,730.61 L315.5,730.06 L316.0,729.60 L316.5,729.22 L317.0,728.92 L317.5,728.70 L318.0,728.56 L318.5,728.48 L319.0,728.48 L319.5,728.53 L320.0,728.65 L320.5,728.82 L321.0,729.05 L321.5,729.31 L322.0,729.62 L322.5,729.97 L323.0,730.35 L323.5,730.76 L324.0,731.20 L324.5,731.66 L325.0,732.14 L325.5,732.64 L326.0,733.15 L326.5,733.67 L327.0,734.19 L327.5,734.73 L328.0,735.26 L328.5,735.79 L329.0,736.31 L329.5,736.82 L330.0,737.32 L330.5,737.81 L331.0,738.27 L331.5,738.71 L332.0,739.12 L332.5,739.49 L333.0,739.82 L333.5,740.11 L334.0,740.35 L334.5,740.53 L335.0,740.65 L335.5,740.71 L336.0,740.69 L336.5,740.60 L337.0,740.43 L337.5,740.17 L338.0,739.83 L338.5,739.39 L339.0,738.87 L339.5,738.26 L340.0,737.55 L340.5,736.76 L341.0,735.88 L341.5,734.92 L342.0,733.89 L342.5,732.78 L343.0,731.62 L343.5,730.40 L344.0,729.13 L344.5,727.83 L345.0,726.51 L345.5,725.18 L346.0,723.84 L346.5,722.52 L347.0,721.21 L347.5,719.93 L348.0,718.70 L348.5,717.51 L349.0,716.38 L349.5,715.32 L350.0,714.33 L350.5,713.41 L351.0,712.57 L351.5,711.82 L352.0,711.14 L352.5,710.56 L353.0,710.05 L353.5,709.64 L354.0,709.30 L354.5,709.04 L355.0,708.86 L355.5,708.75 L356.0,708.70 L356.5,708.72 L357.0,708.81 L357.5,708.94 L358.0,709.13 L358.5,709.37 L359.0,709.65 L359.5,709.96 L360.0,710.31 L360.5,710.69 L361.0,711.10 L361.5,711.53 L362.0,711.99 L362.5,712.45 L363.0,712.94 L363.5,713.43 L364.0,713.93 L364.5,714.43 L365.0,714.94 L365.5,715.44 L366.0,715.94 L366.5,716.43 L367.0,716.91 L367.5,717.37 L368.0,717.81 L368.5,718.22 L369.0,718.61 L369.5,718.96 L370.0,719.28 L370.5,719.55 L371.0,719.77 L371.5,719.93 L372.0,720.04 L372.5,720.08 L373.0,720.04 L373.5,719.93 L374.0,719.74 L374.5,719.46 L375.0,719.09 L375.5,718.64 L376.0,718.10 L376.5,717.47 L377.0,716.74 L377.5,715.93 L378.0,715.04 L378.5,714.07 L379.0,713.03 L379.5,711.91 L380.0,710.74 L380.5,709.52 L381.0,708.26 L381.5,706.97 L382.0,705.66 L382.5,704.35 L383.0,703.05 L383.5,701.76 L384.0,700.50 L384.5,699.28 L385.0,698.10 L385.5,696.97 L386.0,695.90 L386.5,694.89 L387.0,693.95 L387.5,693.08 L388.0,692.29 L388.5,691.57 L389.0,690.93 L389.5,690.37 L390.0,689.87 L390.5,689.45 L391.0,689.10 L391.5,688.81 L392.0,688.58 L392.5,688.41 L393.0,688.30 L393.5,688.25 L394.0,688.23 L394.5,688.24 L395.0,688.26 L395.5,688.28 L396.0,688.28 L396.5,688.26 L397.0,688.20 L397.5,687.91 L398.0,687.26 L398.5,686.32 L399.0,685.14 L399.5,683.79 L400.0,682.35 L400.5,680.87 L401.0,679.42 L401.5,677.89 L402.0,676.14 L402.5,674.21 L403.0,672.13 L403.5,669.96 L404.0,667.71 L404.5,665.43 L405.0,663.16 L405.5,660.86 L406.0,658.47 L406.5,655.99 L407.0,653.42 L407.5,650.75 L408.0,647.98 L408.5,645.12 L409.0,642.16 L409.5,639.10 L410.0,635.95 L410.5,632.68 L411.0,629.30 L411.5,625.80 L412.0,622.19 L412.5,618.47 L413.0,614.64 L413.5,610.72 L414.0,606.71 L414.5,602.62 L415.0,598.46 L415.5,594.23 L416.0,589.96 L416.5,585.61 L417.0,581.18 L417.5,576.69 L418.0,572.15 L418.5,567.60 L419.0,563.04 L419.5,558.51 L420.0,554.02 L420.5,549.62 L421.0,545.29 L421.5,541.05 L422.0,536.93 L422.5,532.91 L423.0,528.94 L423.5,525.05 L424.0,521.24 L424.5,517.53 L425.0,513.92 L425.5,510.43 L426.0,507.07 L426.5,503.84 L427.0,500.75 L427.5,497.81 L428.0,495.03 L428.5,492.39 L429.0,489.87 L429.5,487.48 L430.0,485.20 L430.5,483.05 L431.0,481.02 L431.5,479.12 L432.0,477.35 L432.5,475.70 L433.0,474.17 L433.5,472.77 L434.0,471.48 L434.5,470.30 L435.0,469.19 L435.5,468.15 L436.0,467.18 L436.5,466.26 L437.0,465.40 L437.5,464.58 L438.0,463.81 L438.5,463.06 L439.0,462.34 L439.5,461.64 L440.0,460.96 L440.5,460.28 L441.0,459.61 L441.5,458.93 L442.0,458.24 L442.5,457.54 L443.0,456.83 L443.5,456.08 L444.0,455.31 L444.5,454.50 L445.0,453.64 L445.5,452.74 L446.0,451.78 L446.5,450.75 L447.0,449.67 L447.5,448.52 L448.0,447.29 L448.5,446.00 L449.0,444.62 L449.5,443.18 L450.0,441.65 L450.5,440.05 L451.0,438.38 L451.5,436.64 L452.0,434.84 L452.5,432.99 L453.0,431.09 L453.5,429.16 L454.0,427.20 L454.5,425.21 L455.0,423.22 L455.5,421.23 L456.0,419.24 L456.5,417.26 L457.0,415.31 L457.5,413.39 L458.0,411.51 L458.5,409.69 L459.0,407.92 L459.5,406.23 L460.0,404.60 L460.5,403.05 L461.0,401.55 L461.5,400.12 L462.0,398.76 L462.5,397.48 L463.0,396.28 L463.5,395.18 L464.0,394.17 L464.5,393.25 L465.0,392.44 L465.5,391.74 L466.0,391.14 L466.5,390.66 L467.0,390.28 L467.5,390.02 L468.0,389.88 L468.5,389.83 L469.0,389.88 L469.5,390.00 L470.0,390.20 L470.5,390.47 L471.0,390.80 L471.5,391.20 L472.0,391.66 L472.5,392.16 L473.0,392.71 L473.5,393.29 L474.0,393.90 L474.5,394.54 L475.0,395.19 L475.5,395.85 L476.0,396.51 L476.5,397.16 L477.0,397.81 L477.5,398.43 L478.0,399.03 L478.5,399.59 L479.0,400.12 L479.5,400.61 L480.0,401.04 L480.5,401.43 L481.0,401.75 L481.5,402.01 L482.0,402.21 L482.5,402.34 L483.0,402.40 L483.5,402.39 L484.0,402.30 L484.5,402.14 L485.0,401.90 L485.5,401.58 L486.0,401.18 L486.5,400.70 L487.0,400.14 L487.5,399.51 L488.0,398.82 L488.5,398.07 L489.0,397.27 L489.5,396.43 L490.0,395.54 L490.5,394.63 L491.0,393.70 L491.5,392.75 L492.0,391.80 L492.5,390.85 L493.0,389.91 L493.5,388.99 L494.0,388.09 L494.5,387.20 L495.0,386.35 L495.5,385.53 L496.0,384.75 L496.5,384.01 L497.0,383.31 L497.5,382.68 L498.0,382.09 L498.5,381.57 L499.0,381.12 L499.5,380.73 L500.0,380.41 L500.5,380.16 L501.0,379.99 L501.5,379.91 L502.0,379.94 L502.5,380.07 L503.0,380.31 L503.5,380.65 L504.0,381.09 L504.5,381.62 L505.0,382.25 L505.5,382.96 L506.0,383.75 L506.5,384.62 L507.0,385.56 L507.5,386.56 L508.0,387.61 L508.5,388.71 L509.0,389.85 L509.5,391.02 L510.0,392.21 L510.5,393.43 L511.0,394.67 L511.5,395.93 L512.0,397.21 L512.5,398.48 L513.0,399.76 L513.5,401.02 L514.0,402.27 L514.5,403.50 L515.0,404.69 L515.5,405.85 L516.0,406.97 L516.5,408.04 L517.0,409.06 L517.5,410.02 L518.0,410.91 L518.5,411.74 L519.0,412.50 L519.5,413.18 L520.0,413.79 L520.5,414.32 L521.0,414.76 L521.5,415.13 L522.0,415.41 L522.5,415.62 L523.0,415.74 L523.5,415.79 L524.0,415.76 L524.5,415.66 L525.0,415.50 L525.5,415.26 L526.0,414.97 L526.5,414.62 L527.0,414.22 L527.5,413.77 L528.0,413.28 L528.5,412.76 L529.0,412.22 L529.5,411.65 L530.0,411.07 L530.5,410.48 L531.0,409.89 L531.5,409.30 L532.0,408.74 L532.5,408.19 L533.0,407.67 L533.5,407.18 L534.0,406.73 L534.5,406.33 L535.0,405.98 L535.5,405.69 L536.0,405.46 L536.5,405.29 L537.0,405.20 L537.5,405.18 L538.0,405.25 L538.5,405.39 L539.0,405.62 L539.5,405.93 L540.0,406.33 L540.5,406.81 L541.0,407.38 L541.5,408.03 L542.0,408.76 L542.5,409.57 L543.0,410.45 L543.5,411.41 L544.0,412.44 L544.5,413.54 L545.0,414.69 L545.5,415.90 L546.0,417.16 L546.5,418.47 L547.0,419.81 L547.5,421.18 L548.0,422.58 L548.5,423.99 L549.0,425.42 L549.5,426.85 L550.0,428.28 L550.5,429.69 L551.0,431.09 L551.5,432.47 L552.0,433.81 L552.5,435.12 L553.0,436.39 L553.5,437.60 L554.0,438.77 L554.5,439.87 L555.0,440.91 L555.5,441.88 L556.0,442.77 L556.5,443.59 L557.0,444.33 L557.5,445.00 L558.0,445.57 L558.5,446.07 L559.0,446.47 L559.5,446.80 L560.0,447.04 L560.5,447.19 L561.0,447.27 L561.5,447.27 L562.0,447.19 L562.5,447.05 L563.0,446.84 L563.5,446.58 L564.0,446.25 L564.5,445.88 L565.0,445.46 L565.5,445.00 L566.0,444.51 L566.5,444.00 L567.0,443.46 L567.5,442.91 L568.0,442.35 L568.5,441.80 L569.0,441.24 L569.5,440.71 L570.0,440.19 L570.5,439.70 L571.0,439.24 L571.5,438.83 L572.0,438.45 L572.5,438.13 L573.0,437.86 L573.5,437.64 L574.0,437.50 L574.5,437.42 L575.0,437.40 L575.5,437.47 L576.0,437.61 L576.5,437.82 L577.0,438.12 L577.5,438.49 L578.0,438.94 L578.5,439.47 L579.0,440.08 L579.5,440.76 L580.0,441.52 L580.5,442.34 L581.0,443.24 L581.5,444.19 L582.0,445.20 L582.5,446.27 L583.0,447.38 L583.5,448.54 L584.0,449.74 L584.5,450.96 L585.0,452.21 L585.5,453.48 L586.0,454.76 L586.5,456.04 L587.0,457.32 L587.5,458.59 L588.0,459.85 L588.5,461.08 L589.0,462.28 L589.5,463.45 L590.0,464.58 L590.5,465.66 L591.0,466.69 L591.5,467.65 L592.0,468.56 L592.5,469.40 L593.0,470.17 L593.5,470.86 L594.0,471.48 L594.5,472.02 L595.0,472.48 L595.5,472.86 L596.0,473.15 L596.5,473.37 L597.0,473.50 L597.5,473.55 L598.0,473.53 L598.5,473.43 L599.0,473.25 L599.5,473.01 L600.0,472.70 L600.5,472.33 L601.0,471.91 L601.5,471.43 L602.0,470.91 L602.5,470.34 L603.0,469.75 L603.5,469.12 L604.0,468.47 L604.5,467.81 L605.0,467.14 L605.5,466.47 L606.0,465.80 L606.5,465.14 L607.0,464.50 L607.5,463.89 L608.0,463.30 L608.5,462.76 L609.0,462.25 L609.5,461.80 L610.0,461.39 L610.5,461.05 L611.0,460.76 L611.5,460.54 L612.0,460.39 L612.5,460.31 L613.0,460.31 L613.5,460.38 L614.0,460.53 L614.5,460.76 L615.0,461.06 L615.5,461.45 L616.0,461.92 L616.5,462.46 L617.0,463.08 L617.5,463.76 L618.0,464.52 L618.5,465.34 L619.0,466.22 L619.5,467.16 L620.0,468.14 L620.5,469.18 L621.0,470.25 L621.5,471.35 L622.0,472.48 L622.5,473.63 L623.0,474.79 L623.5,475.96 L624.0,477.13 L624.5,478.30 L625.0,479.44 L625.5,480.57 L626.0,481.67 L626.5,482.74 L627.0,483.76 L627.5,484.74 L628.0,485.67 L628.5,486.54 L629.0,487.35 L629.5,488.09 L630.0,488.76 L630.5,489.36 L631.0,489.89 L631.5,490.33 L632.0,490.69 L632.5,490.97 L633.0,491.17 L633.5,491.28 L634.0,491.31 L634.5,491.27 L635.0,491.14 L635.5,490.93 L636.0,490.65 L636.5,490.29 L637.0,489.87 L637.5,489.39 L638.0,488.84 L638.5,488.24 L639.0,487.60 L639.5,486.91 L640.0,486.18 L640.5,485.42 L641.0,484.64 L641.5,483.84 L642.0,483.03 L642.5,482.22 L643.0,481.41 L643.5,480.61 L644.0,479.83 L644.5,479.07 L645.0,478.35 L645.5,477.66 L646.0,477.01 L646.5,476.41 L647.0,475.86 L647.5,475.38 L648.0,474.95 L648.5,474.60 L649.0,474.31 L649.5,474.10 L650.0,473.96 L650.5,473.90 L651.0,473.93 L651.5,474.03 L652.0,474.21 L652.5,474.48 L653.0,474.82 L653.5,475.25 L654.0,475.75 L654.5,476.33 L655.0,476.97 L655.5,477.69 L656.0,478.46 L656.5,479.30 L657.0,480.19 L657.5,481.13 L658.0,482.11 L658.5,483.12 L659.0,484.17 L659.5,485.24 L660.0,486.32 L660.5,487.41 L661.0,488.51 L661.5,489.60 L662.0,490.68 L662.5,491.74 L663.0,492.78 L663.5,493.78 L664.0,494.75 L664.5,495.67 L665.0,496.54 L665.5,497.35 L666.0,498.11 L666.5,498.79 L667.0,499.41 L667.5,499.96 L668.0,500.43 L668.5,500.81 L669.0,501.12 L669.5,501.35 L670.0,501.49 L670.5,501.54 L671.0,501.52 L671.5,501.41 L672.0,501.22 L672.5,500.95 L673.0,500.60 L673.5,500.18 L674.0,499.69 L674.5,499.13 L675.0,498.52 L675.5,497.84 L676.0,497.12 L676.5,496.35 L677.0,495.54 L677.5,494.70 L678.0,493.83 L678.5,492.95 L679.0,492.05 L679.5,491.15 L680.0,490.24 L680.5,489.35 L681.0,488.47 L681.5,487.62 L682.0,486.79 L682.5,486.00 L683.0,485.26 L683.5,484.56 L684.0,483.91 L684.5,483.32 L685.0,482.80 L685.5,482.34 L686.0,481.95 L686.5,481.64 L687.0,481.41 L687.5,481.25 L688.0,481.18 L688.5,481.18 L689.0,481.27 L689.5,481.45 L690.0,481.70 L690.5,482.04 L691.0,482.45 L691.5,482.95 L692.0,483.51 L692.5,484.15 L693.0,484.85 L693.5,485.62 L694.0,486.44 L694.5,487.31 L695.0,488.22 L695.5,489.18 L696.0,490.16 L696.5,491.18 L697.0,492.21 L697.5,493.25 L698.0,494.30 L698.5,495.35 L699.0,496.39 L699.5,497.41 L700.0,498.41 L700.5,499.37 L701.0,500.30 L701.5,501.19 L702.0,502.03 L702.5,502.81 L703.0,503.54 L703.5,504.20 L704.0,504.79 L704.5,505.30 L705.0,505.74 L705.5,506.10 L706.0,506.38 L706.5,506.57 L707.0,506.68 L707.5,506.71 L708.0,506.64 L708.5,506.50 L709.0,506.27 L709.5,505.96 L710.0,505.57 L710.5,505.10 L711.0,504.57 L711.5,503.97 L712.0,503.30 L712.5,502.58 L713.0,501.80 L713.5,500.98 L714.0,500.11 L714.5,499.21 L715.0,498.29 L715.5,497.34 L716.0,496.38 L716.5,495.41 L717.0,494.44 L717.5,493.48 L718.0,492.53 L718.5,491.61 L719.0,490.71 L719.5,489.85 L720.0,489.03 L720.5,488.25 L721.0,487.53 L721.5,486.87 L722.0,486.27 L722.5,485.74 L723.0,485.28 L723.5,484.90 L724.0,484.60 L724.5,484.37 L725.0,484.23 L725.5,484.17 L726.0,484.20 L726.5,484.31 L727.0,484.50 L727.5,484.78 L728.0,485.14 L728.5,485.57 L729.0,486.08 L729.5,486.67 L730.0,487.32 L730.5,488.03 L731.0,488.81 L731.5,489.63 L732.0,490.51 L732.5,491.42 L733.0,492.37 L733.5,493.35 L734.0,494.35 L734.5,495.36 L735.0,496.38 L735.5,497.40 L736.0,498.41 L736.5,499.41 L737.0,500.38 L737.5,501.33 L738.0,502.24 L738.5,503.11 L739.0,503.93 L739.5,504.70 L740.0,505.41 L740.5,506.05 L741.0,506.63 L741.5,507.13 L742.0,507.56 L742.5,507.91 L743.0,508.18 L743.5,508.36 L744.0,508.46 L744.5,508.47 L745.0,508.40 L745.5,508.24 L746.0,508.00 L746.5,507.68 L747.0,507.28 L747.5,506.80 L748.0,506.24 L748.5,505.62 L749.0,504.93 L749.5,504.18 L750.0,503.38 L750.5,502.52 L751.0,501.63 L751.5,500.69 L752.0,499.73 L752.5,498.74 L753.0,497.74 L753.5,496.72 L754.0,495.71 L754.5,494.70 L755.0,493.71 L755.5,492.73 L756.0,491.78 L756.5,490.87 L757.0,489.99 L757.5,489.16 L758.0,488.39 L758.5,487.67 L759.0,487.02 L759.5,486.43 L760.0,485.91 L760.5,485.47 L761.0,485.11 L761.5,484.83 L762.0,484.64 L762.5,484.53 L763.0,484.50 L763.5,484.56 L764.0,484.71 L764.5,484.94 L765.0,485.25 L765.5,485.64 L766.0,486.11 L766.5,486.66 L767.0,487.27 L767.5,487.95 L768.0,488.69 L768.5,489.49 L769.0,490.34 L769.5,491.23 L770.0,492.16 L770.5,493.12 L771.0,494.10 L771.5,495.10 L772.0,496.11 L772.5,497.13 L773.0,498.14 L773.5,499.14 L774.0,500.12 L774.5,501.07 L775.0,501.99 L775.5,502.87 L776.0,503.71 L776.5,504.49 L777.0,505.22 L777.5,505.88 L778.0,506.48 L778.5,507.01 L779.0,507.46 L779.5,507.83 L780.0,508.13 L780.5,508.34 L781.0,508.46 L781.5,508.50 L782.0,508.45 L782.5,508.32 L783.0,508.11 L783.5,507.81 L784.0,507.43 L784.5,506.97 L785.0,506.44 L785.5,505.83 L786.0,505.16 L786.5,504.43 L787.0,503.64 L787.5,502.80 L788.0,501.92 L788.5,500.99 L789.0,500.04 L789.5,499.06 L790.0,498.06 L790.5,497.05 L791.0,496.03 L791.5,495.02 L792.0,494.02 L792.5,493.04 L793.0,492.08 L793.5,491.16 L794.0,490.27 L794.5,489.42 L795.0,488.63 L795.5,487.89 L796.0,487.22 L796.5,486.61 L797.0,486.07 L797.5,485.61 L798.0,485.22 L798.5,484.92 L799.0,484.69 L799.5,484.55 L800.0,484.50 L800.5,484.53 L801.0,484.65 L801.5,484.85 L802.0,485.14 L802.5,485.51 L803.0,485.95 L803.5,486.47 L804.0,487.07 L804.5,487.73 L805.0,488.45 L805.5,489.23 L806.0,490.06 L806.5,490.94 L807.0,491.86 L807.5,492.81 L808.0,493.78 L808.5,494.78 L809.0,495.79 L809.5,496.80 L810.0,497.82 L810.5,498.82 L811.0,499.80 L811.5,500.77 L812.0,501.70 L812.5,502.59 L813.0,503.44 L813.5,504.25 L814.0,504.99 L814.5,505.68 L815.0,506.30 L815.5,506.85 L816.0,507.32 L816.5,507.72 L817.0,508.04 L817.5,508.28 L818.0,508.43 L818.5,508.50 L819.0,508.48 L819.5,508.37 L820.0,508.18 L820.5,507.91 L821.0,507.56 L821.5,507.12 L822.0,506.61 L822.5,506.03 L823.0,505.38 L823.5,504.67 L824.0,503.90 L824.5,503.08 L825.0,502.20 L825.5,501.29 L826.0,500.35 L826.5,499.37 L827.0,498.38 L827.5,497.37 L828.0,496.36 L828.5,495.35 L829.0,494.34 L829.5,493.35 L830.0,492.39 L830.5,491.45 L831.0,490.55 L831.5,489.69 L832.0,488.88 L832.5,488.12 L833.0,487.43 L833.5,486.80 L834.0,486.24 L834.5,485.75 L835.0,485.34 L835.5,485.00 L836.0,484.75 L836.5,484.59 L837.0,484.51 L837.5,484.51 L838.0,484.60 L838.5,484.78 L839.0,485.04 L839.5,485.38 L840.0,485.80 L840.5,486.30 L841.0,486.87 L841.5,487.51 L842.0,488.21 L842.5,488.97 L843.0,489.79 L843.5,490.65 L844.0,491.56 L844.5,492.50 L845.0,493.47 L845.5,494.46 L846.0,495.47 L846.5,496.48 L847.0,497.49 L847.5,498.50 L848.0,499.49 L848.5,500.46 L849.0,501.40 L849.5,502.31 L850.0,503.18 L850.5,504.00 L851.0,504.76 L851.5,505.47 L852.0,506.11 L852.5,506.68 L853.0,507.18 L853.5,507.60 L854.0,507.95 L854.5,508.21 L855.0,508.39 L855.5,508.48 L856.0,508.49 L856.5,508.42 L857.0,508.25 L857.5,508.01 L858.0,507.68 L858.5,507.27 L859.0,506.79 L859.5,506.23 L860.0,505.60 L860.5,504.91 L861.0,504.15 L861.5,503.35 L862.0,502.49 L862.5,501.59 L863.0,500.65 L863.5,499.69 L864.0,498.70 L864.5,497.70 L865.0,496.68 L865.5,495.67 L866.0,494.66 L866.5,493.67 L867.0,492.69 L867.5,491.74 L868.0,490.83 L868.5,489.96 L869.0,489.13 L869.5,488.36 L870.0,487.64 L870.5,486.99 L871.0,486.41 L871.5,485.89 L872.0,485.46 L872.5,485.10 L873.0,484.83 L873.5,484.63 L874.0,484.52 L874.5,484.50 L875.0,484.57 L875.5,484.71 L876.0,484.95 L876.5,485.26 L877.0,485.66 L877.5,486.13 L878.0,486.68 L878.5,487.30 L879.0,487.98 L879.5,488.72 L880.0,489.52 L880.5,490.37 L881.0,491.26 L881.5,492.20 L882.0,493.16 L882.5,494.14 L883.0,495.14 L883.5,496.16 L884.0,497.17 L884.5,498.18 L885.0,499.18 L885.5,500.15 L886.0,501.11 L886.5,502.03 L887.0,502.91 L887.5,503.74 L888.0,504.52 L888.5,505.25 L889.0,505.91 L889.5,506.50 L890.0,507.03 L890.5,507.48 L891.0,507.85 L891.5,508.14 L892.0,508.34 L892.5,508.46 L893.0,508.50 L893.5,508.45 L894.0,508.31 L894.5,508.10 L895.0,507.79 L895.5,507.41 L896.0,506.95 L896.5,506.41 L897.0,505.81 L897.5,505.13 L898.0,504.40 L898.5,503.61 L899.0,502.77 L899.5,501.88 L900.0,500.96 L900.5,500.00 L901.0,499.02 L901.5,498.02 L902.0,497.01 L902.5,495.99 L903.0,494.98 L903.5,493.98 L904.0,493.00 L904.5,492.04 L905.0,491.12 L905.5,490.23 L906.0,489.39 L906.5,488.60 L907.0,487.87 L907.5,487.19 L908.0,486.59 L908.5,486.05 L909.0,485.59 L909.5,485.21 L910.0,484.90 L910.5,484.69 L911.0,484.55 L911.5,484.50 L912.0,484.54 L912.5,484.66 L913.0,484.86 L913.5,485.15 L914.0,485.52 L914.5,485.97 L915.0,486.50 L915.5,487.09 L916.0,487.75 L916.5,488.48 L917.0,489.26 L917.5,490.09 L918.0,490.97 L918.5,491.89 L919.0,492.85 L919.5,493.82 L920.0,494.82 L920.5,495.83 L921.0,496.84 L921.5,497.86 L922.0,498.86 L922.5,499.84 L923.0,500.80 L923.5,501.74 L924.0,502.63 L924.5,503.48 L925.0,504.28 L925.5,505.02 L926.0,505.70 L926.5,506.32 L927.0,506.87 L927.5,507.34 L928.0,507.74 L928.5,508.05 L929.0,508.29 L929.5,508.43 L930.0,508.50 L930.5,508.48 L931.0,508.37 L931.5,508.17 L932.0,507.90 L932.5,507.54 L933.0,507.11 L933.5,506.59 L934.0,506.01 L934.5,505.36 L935.0,504.64 L935.5,503.87 L936.0,503.04 L936.5,502.17 L937.0,501.26 L937.5,500.31 L938.0,499.33 L938.5,498.34 L939.0,497.33 L939.5,496.32 L940.0,495.30 L940.5,494.30 L941.0,493.31 L941.5,492.35 L942.0,491.41 L942.5,490.51 L943.0,489.65 L943.5,488.85 L944.0,488.09 L944.5,487.40 L945.0,486.77 L945.5,486.21 L946.0,485.73 L946.5,485.32 L947.0,484.99 L947.5,484.75 L948.0,484.58 L948.5,484.51 L949.0,484.52 L949.5,484.61 L950.0,484.79 L950.5,485.05 L951.0,485.40 L951.5,485.82 L952.0,486.32 L952.5,486.89 L953.0,487.53 L953.5,488.24 L954.0,489.00 L954.5,489.82 L955.0,490.69 L955.5,491.60 L956.0,492.54 L956.5,493.51 L957.0,494.50 L957.5,495.51 L958.0,496.52 L958.5,497.53 L959.0,498.54 L959.5,499.53 L960.0,500.50 L960.5,501.44 L961.0,502.35 L961.5,503.21 L962.0,504.03 L962.5,504.79 L963.0,505.49 L963.5,506.13 L964.0,506.70 L964.5,507.20 L965.0,507.62 L965.5,507.96 L966.0,508.22 L966.5,508.40 L967.0,508.49 L967.5,508.49 L968.0,508.41 L968.5,508.25 L969.0,508.00 L969.5,507.66 L970.0,507.25 L970.5,506.76 L971.0,506.20 L971.5,505.57 L972.0,504.88 L972.5,504.12 L973.0,503.31 L973.5,502.45 L974.0,501.55 L974.5,500.61 L975.0,499.65 L975.5,498.66 L976.0,497.65 L976.5,496.64 L977.0,495.63 L977.5,494.62 L978.0,493.63 L978.5,492.65 L979.0,491.71 L979.5,490.80 L980.0,489.92 L980.5,489.10 L981.0,488.33 L981.5,487.62 L982.0,486.97 L982.5,486.39 L983.0,485.88 L983.5,485.44 L984.0,485.09 L984.5,484.82 L985.0,484.63 L985.5,484.52 L986.0,484.50 L986.5,484.57 L987.0,484.72 L987.5,484.96 L988.0,485.28 L988.5,485.68 L989.0,486.15 L989.5,486.70 L990.0,487.32 L990.5,488.01 L991.0,488.75 L991.5,489.56 L992.0,490.41 L992.5,491.30 L993.0,492.23 L993.5,493.20 L994.0,494.18 L994.5,495.18 L995.0,496.20 L995.5,497.21 L996.0,498.22 L996.5,499.22 L997.0,500.19 L997.5,501.14 L998.0,502.06 L998.5,502.94 L999.0,503.77 L999.5,504.55 L1000.0,505.27 L1000.5,505.93 L1001.0,506.53 L1001.5,507.05 L1002.0,507.49 L1002.5,507.86 L1003.0,508.15 L1003.5,508.35 L1004.0,508.47 L1004.5,508.50 L1005.0,508.45 L1005.5,508.31 L1006.0,508.08 L1006.5,507.78 L1007.0,507.39 L1007.5,506.93 L1008.0,506.39 L1008.5,505.78 L1009.0,505.11 L1009.5,504.37 L1010.0,503.58 L1010.5,502.73 L1011.0,501.84 L1011.5,500.92 L1012.0,499.96 L1012.5,498.98 L1013.0,497.98 L1013.5,496.97 L1014.0,495.95 L1014.5,494.94 L1015.0,493.94 L1015.5,492.96 L1016.0,492.01 L1016.5,491.08 L1017.0,490.20 L1017.5,489.36 L1018.0,488.57 L1018.5,487.84 L1019.0,487.17 L1019.5,486.56 L1020.0,486.03 L1020.5,485.57 L1021.0,485.19 L1021.5,484.89 L1022.0,484.68 L1022.5,484.55 L1023.0,484.50 L1023.5,484.54 L1024.0,484.66 L1024.5,484.87 L1025.0,485.17 L1025.5,485.54 L1026.0,485.99 L1026.5,486.52 L1027.0,487.12 L1027.5,487.78 L1028.0,488.51 L1028.5,489.29 L1029.0,490.13 L1029.5,491.01 L1030.0,491.93 L1030.5,492.88 L1031.0,493.86 L1031.5,494.86 L1032.0,495.87 L1032.5,496.89 L1033.0,497.90 L1033.5,498.90 L1034.0,499.88 L1034.5,500.84 L1035.0,501.77 L1035.5,502.66 L1036.0,503.51 L1036.5,504.31 L1037.0,505.05 L1037.5,505.73 L1038.0,506.34 L1038.5,506.89 L1039.0,507.36 L1039.5,507.75 L1040.0,508.06 L1040.5,508.29 L1041.0,508.44 L1041.5,508.50 L1042.0,508.47 L1042.5,508.36 L1043.0,508.17 L1043.5,507.89 L1044.0,507.53 L1044.5,507.09 L1045.0,506.57 L1045.5,505.98 L1046.0,505.33 L1046.5,504.61 L1047.0,503.84 L1047.5,503.01 L1048.0,502.13 L1048.5,501.22 L1049.0,500.27 L1049.5,499.29 L1050.0,498.30 L1050.5,497.29 L1051.0,496.28 L1051.5,495.26 L1052.0,494.26 L1052.5,493.27 L1053.0,492.31 L1053.5,491.37 L1054.0,490.48 L1054.5,489.62 L1055.0,488.82 L1055.5,488.07 L1056.0,487.37 L1056.5,486.75 L1057.0,486.19 L1057.5,485.71 L1058.0,485.31 L1058.5,484.98 L1059.0,484.74 L1059.5,484.58 L1060.0,484.51 L1060.5,484.52 L1061.0,484.62 L1061.5,484.80 L1062.0,485.06 L1062.5,485.41 L1063.0,485.84 L1063.5,486.34 L1064.0,486.92 L1064.5,487.56 L1065.0,488.27 L1065.5,489.04 L1066.0,489.86 L1066.5,490.72 L1067.0,491.63 L1067.5,492.58 L1068.0,493.55 L1068.5,494.54 L1069.0,495.55 L1069.5,496.56 L1070.0,497.57 L1070.5,498.58 L1071.0,499.57 L1071.5,500.54 L1072.0,501.48 L1072.5,502.38 L1073.0,503.24 L1073.5,504.06 L1074.0,504.82 L1074.5,505.52 L1075.0,506.16 L1075.5,506.72 L1076.0,507.22 L1076.5,507.63 L1077.0,507.97 L1077.5,508.23 L1078.0,508.40 L1078.5,508.49 L1079.0,508.49 L1079.5,508.41 L1080.0,508.24 L1080.5,507.98 L1081.0,507.65 L1081.5,507.24 L1082.0,506.74 L1082.5,506.18 L1083.0,505.55 L1083.5,504.85 L1084.0,504.09 L1084.5,503.28 L1085.0,502.42 L1085.5,501.52 L1086.0,500.58 L1086.5,499.61 L1087.0,498.62 L1087.5,497.61 L1088.0,496.60 L1088.5,495.59 L1089.0,494.58 L1089.5,493.59 L1090.0,492.61 L1090.5,491.67 L1091.0,490.76 L1091.5,489.89 L1092.0,489.07 L1092.5,488.30 L1093.0,487.59 L1093.5,486.94 L1094.0,486.36 L1094.5,485.86 L1095.0,485.43 L1095.5,485.08 L1096.0,484.81 L1096.5,484.62 L1097.0,484.52 L1097.5,484.50 L1098.0,484.57 L1098.5,484.73 L1099.0,484.97 L1099.5,485.29 L1100.0,485.69 L1100.5,486.17 L1101.0,486.73 L1101.5,487.35 L1102.0,488.04 L1102.5,488.78 L1103.0,489.59 L1103.5,490.44 L1104.0,491.34 L1104.5,492.27 L1105.0,493.23 L1105.5,494.22 L1106.0,495.22 L1106.5,496.24 L1107.0,497.25 L1107.5,498.26 L1108.0,499.25 L1108.5,500.23 L1109.0,501.18 L1109.5,502.10 L1110.0,502.97 L1110.5,503.80 L1111.0,504.58 L1111.5,505.30 L1112.0,505.96 L1112.5,506.55 L1113.0,507.07 L1113.5,507.51 L1114.0,507.87 L1114.5,508.16 L1115.0,508.36 L1115.5,508.47 L1116.0,508.50 L1116.5,508.44 L1117.0,508.30 L1117.5,508.07 L1118.0,507.77 L1118.5,507.38 L1119.0,506.91 L1119.5,506.37 L1120.0,505.76 L1120.5,505.08 L1121.0,504.34 L1121.5,503.54 L1122.0,502.70 L1122.5,501.81 L1123.0,500.88 L1123.5,499.92 L1124.0,498.94 L1124.5,497.94 L1125.0,496.93 L1125.5,495.91 L1126.0,494.90 L1126.5,493.90 L1127.0,492.92 L1127.5,491.97 L1128.0,491.05 L1128.5,490.16 L1129.0,489.33 L1129.5,488.54 L1130.0,487.81 L1130.5,487.14 L1131.0,486.54 L1131.5,486.01 L1132.0,485.56 L1132.5,485.18 L1133.0,484.88 L1133.5,484.67 L1134.0,484.54 L1134.5,484.50 L1135.0,484.54 L1135.5,484.67 L1136.0,484.88 L1136.5,485.18 L1137.0,485.56 L1137.5,486.01 L1138.0,486.54 L1138.5,487.14 L1139.0,487.81 L1139.5,488.54 L1140.0,489.33 L1140.5,490.16 L1141.0,491.05 L1141.5,491.97 L1142.0,492.92 L1142.5,493.90 L1143.0,494.90 L1143.5,495.91 L1144.0,496.93 L1144.5,497.94 L1145.0,498.94 L1145.5,499.92 L1146.0,500.88 L1146.5,501.81 L1147.0,502.70 L1147.5,503.54 L1148.0,504.34 L1148.5,505.08 L1149.0,505.76 L1149.5,506.37 L1150.0,506.91 L1150.5,507.38 L1151.0,507.77 L1151.5,508.07 L1152.0,508.30 L1152.5,508.44 L1153.0,508.50 L1153.5,508.47 L1154.0,508.36 L1154.5,508.16 L1155.0,507.87" fill="none" stroke="#d0d664" stroke-width="2.3" stroke-linejoin="round"/></g>
</svg>

<!-- y labels -->
<div class="lbl" style="left:0;width:40px;text-align:right;top:193px">900</div>
<div class="lbl" style="left:0;width:40px;text-align:right;top:340px">850</div>
<div class="lbl" style="left:0;width:40px;text-align:right;top:487px">800</div>
<div class="lbl" style="left:0;width:40px;text-align:right;top:636px">750</div>
<div class="lbl" style="left:0;width:40px;text-align:right;top:783px">700</div>
<!-- x labels -->
<div class="lbl" style="left:175px;width:40px;text-align:center;top:930px">0.2</div>
<div class="lbl" style="left:361px;width:40px;text-align:center;top:930px">0.3</div>
<div class="lbl" style="left:547px;width:40px;text-align:center;top:930px">0.4</div>
<div class="lbl" style="left:733px;width:40px;text-align:center;top:930px">0.5</div>
<div class="lbl" style="left:919px;width:40px;text-align:center;top:930px">0.6</div>
<div class="lbl" style="left:1105px;width:40px;text-align:center;top:930px">0.7</div>

<!-- status bar -->
<div id="sb" class="a"></div>
<div class="t" style="left:12px;top:967px;font-size:17px;color:#262626;letter-spacing:-0.3px;">Ready</div>
<div class="a" style="left:973px;top:959px;width:126px;height:33px;border-left:1px solid #d4d4d4;border-top:1px solid #d4d4d4;box-sizing:border-box;"></div>
<div class="a" style="left:1099px;top:959px;width:79px;height:33px;border-left:1px solid #d4d4d4;border-top:1px solid #d4d4d4;box-sizing:border-box;"></div>
<div class="t" style="left:977px;top:967px;font-size:17px;color:#262626;">Sample based</div>
<div class="t" style="left:1104px;top:967px;font-size:17px;color:#262626;letter-spacing:-0.2px;">T=0.716</div>
<div class="a" style="left:10px;top:992px;width:1168px;height:2px;background:#dcdcdc;"></div>
<div class="a" style="left:1178px;top:0;width:10px;height:994px;background:#ffffff;"></div>
</body></html>
